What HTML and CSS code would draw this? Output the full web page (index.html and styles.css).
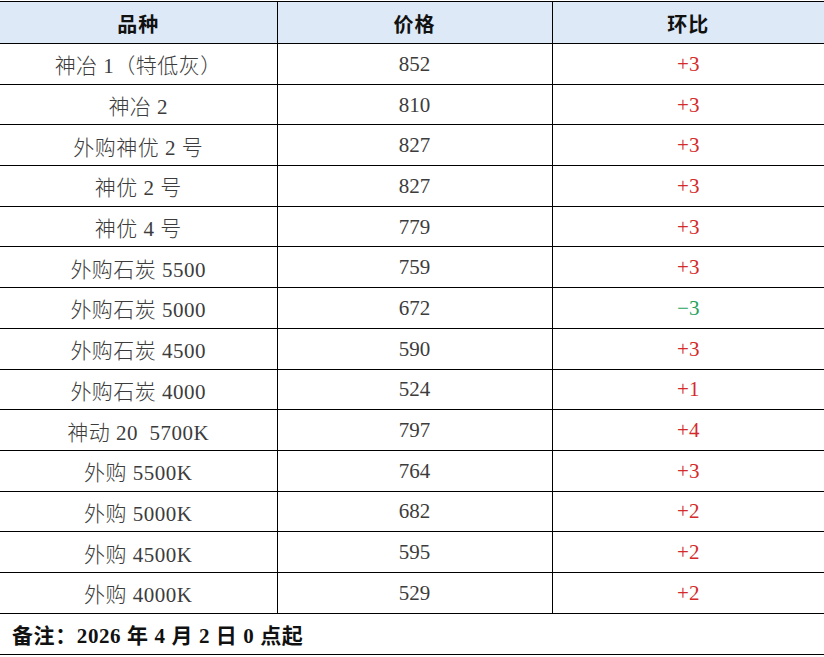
FILE: index.html
```html
<!DOCTYPE html>
<html lang="zh">
<head>
<meta charset="utf-8">
<link rel="stylesheet" href="styles.css">
</head>
<body>
<table class="price-table">
  <colgroup>
    <col class="c1"><col class="c2"><col class="c3">
  </colgroup>
  <thead>
    <tr class="head"><th>品种</th><th>价格</th><th>环比</th></tr>
  </thead>
  <tbody>
    <tr><td class="name">神冶 1（特低灰）</td><td>852</td><td class="up">+3</td></tr>
    <tr><td class="name">神冶 2</td><td>810</td><td class="up">+3</td></tr>
    <tr><td class="name">外购神优 2 号</td><td>827</td><td class="up">+3</td></tr>
    <tr><td class="name">神优 2 号</td><td>827</td><td class="up">+3</td></tr>
    <tr><td class="name">神优 4 号</td><td>779</td><td class="up">+3</td></tr>
    <tr><td class="name">外购石炭 5500</td><td>759</td><td class="up">+3</td></tr>
    <tr><td class="name">外购石炭 5000</td><td>672</td><td class="down">−3</td></tr>
    <tr><td class="name">外购石炭 4500</td><td>590</td><td class="up">+3</td></tr>
    <tr><td class="name">外购石炭 4000</td><td>524</td><td class="up">+1</td></tr>
    <tr><td class="name">神动 20&nbsp;&nbsp;5700K</td><td>797</td><td class="up">+4</td></tr>
    <tr><td class="name">外购 5500K</td><td>764</td><td class="up">+3</td></tr>
    <tr><td class="name">外购 5000K</td><td>682</td><td class="up">+2</td></tr>
    <tr><td class="name">外购 4500K</td><td>595</td><td class="up">+2</td></tr>
    <tr><td class="name">外购 4000K</td><td>529</td><td class="up">+2</td></tr>
  </tbody>
  <tfoot>
    <tr class="foot"><td colspan="3">备注：2026 年 4 月 2 日 0 点起</td></tr>
  </tfoot>
</table>
</body>
</html>
```
FILE: styles.css
```css
html, body {
  margin: 0;
  padding: 0;
  background: #ffffff;
}
body {
  padding-top: 1px;
  font-family: "Liberation Serif", "Noto Sans CJK SC", serif;
}
.price-table {
  width: 824px;
  border-collapse: collapse;
  table-layout: fixed;
}
.c1 { width: 277px; }
.c2 { width: 275px; }
.c3 { width: 272px; }
.price-table th,
.price-table td {
  border: 1px solid #000;
  text-align: center;
  vertical-align: middle;
  padding: 0;
  padding-top: 1px;
  font-size: 21px;
  color: #3c3c3c;
  font-weight: 300;
}
.price-table tr > :first-child { border-left: none; }
.price-table tr > :last-child { border-right: none; }
.head th {
  height: 40px;
  background: #dde9f6;
  color: #111;
  font-weight: 700;
  font-size: 20px;
  letter-spacing: 1px;
}
tbody td {
  height: 38.7px;
}
.name {
  letter-spacing: 0.5px;
}
.up { color: #d42a2a !important; }
.down { color: #27a25e !important; }
.foot td {
  height: 39px;
  text-align: left;
  padding-left: 12px;
  font-weight: 700;
  font-size: 21px;
  letter-spacing: 0.6px;
  color: #111;
}
```
